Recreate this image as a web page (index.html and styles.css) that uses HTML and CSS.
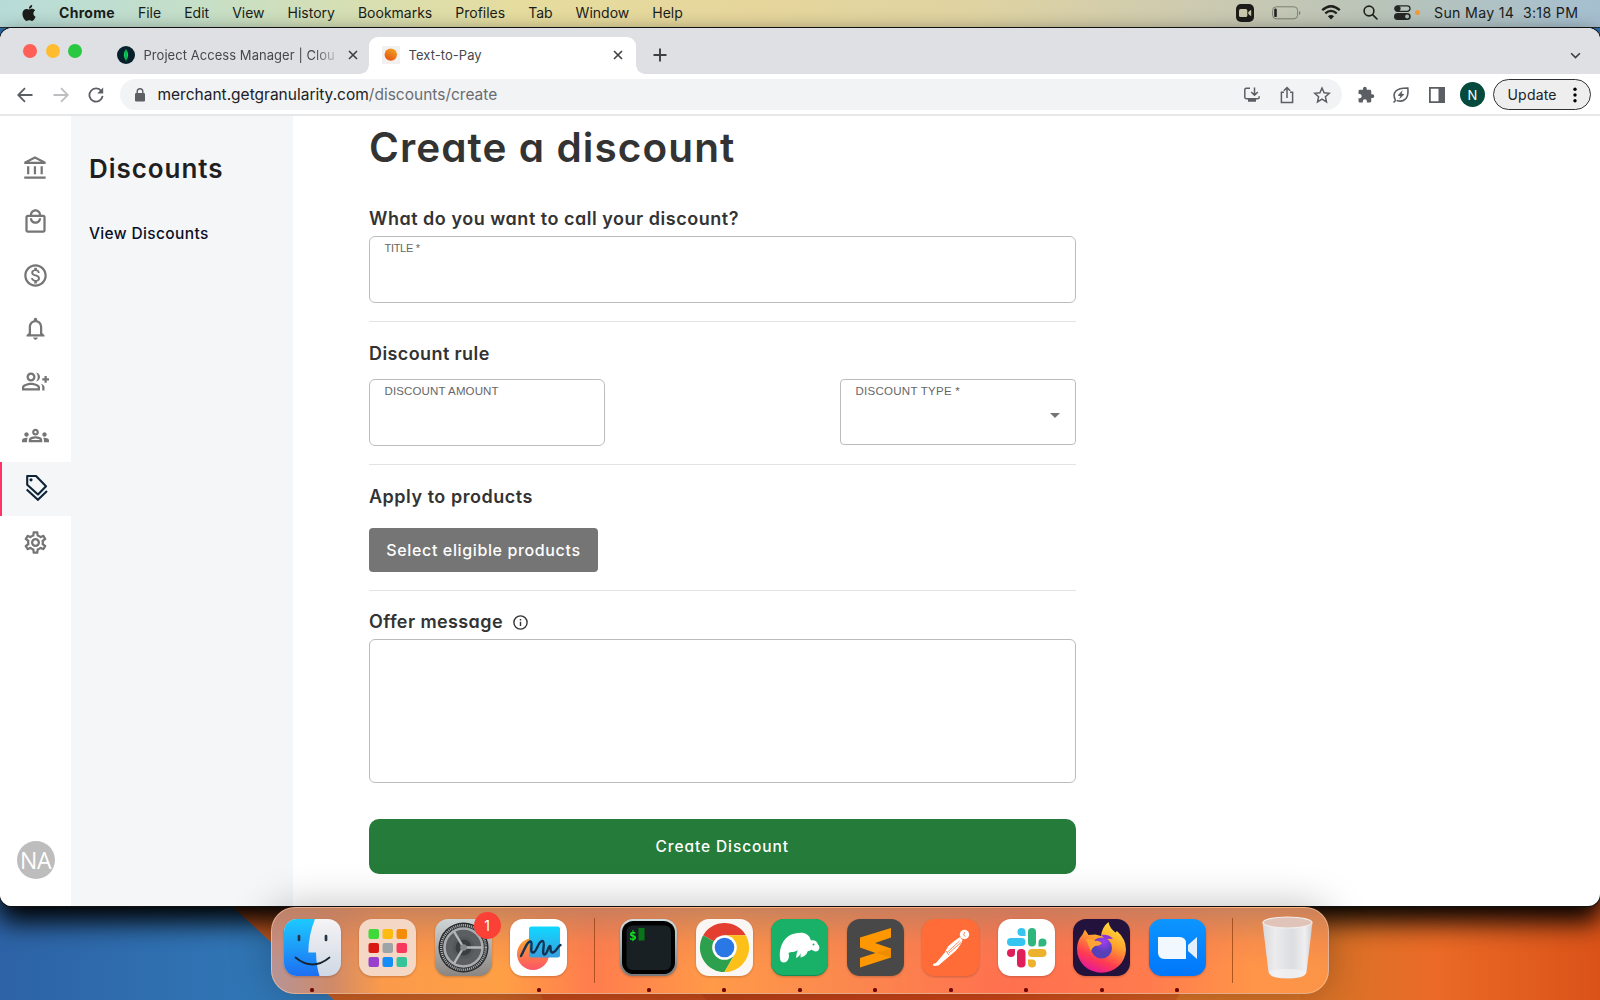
FILE: index.html
```html
<!DOCTYPE html>
<html lang="en">
<head>
<meta charset="utf-8">
<title>Text-to-Pay</title>
<link rel="stylesheet" href="styles.css">
</head>
<body>
<div class="desktop">
  <svg class="wallpaper" viewBox="0 0 1600 1000" preserveAspectRatio="none" aria-hidden="true">
    <defs>
      <linearGradient id="wpBlue" x1="0" x2="1"><stop offset="0" stop-color="#2d63a6"/><stop offset=".7" stop-color="#3179b8"/><stop offset="1" stop-color="#3478b2"/></linearGradient>
      <linearGradient id="wpOrange" x1="0" x2="1"><stop offset="0" stop-color="#c85a22"/><stop offset=".2" stop-color="#cf6526"/><stop offset=".3" stop-color="#b84117"/><stop offset=".55" stop-color="#ce4518"/><stop offset=".8" stop-color="#d97328"/><stop offset=".88" stop-color="#ea6a26"/><stop offset="1" stop-color="#da5218"/></linearGradient>
    </defs>
    <rect width="1600" height="1000" fill="#2f6fae"/>
    <rect y="900" width="420" height="100" fill="url(#wpBlue)"/>
    <path d="M225 900Q280 950 334 1000H1600V900Z" fill="url(#wpOrange)"/>
    <path d="M537 985L543 1000H706L696 985Z" fill="#c74a1a"/>
    <path d="M1185 985L1176 1000H1300V985Z" fill="#da7528"/>
  </svg>

  <header class="menubar">
    <svg class="apple" viewBox="0 0 24 24"><path d="M12.152 6.896c-.948 0-2.415-1.078-3.96-1.04-2.04.027-3.91 1.183-4.961 3.014-2.117 3.675-.546 9.103 1.519 12.09 1.013 1.454 2.208 3.09 3.792 3.039 1.52-.065 2.09-.987 3.935-.987 1.831 0 2.35.987 3.96.948 1.637-.026 2.676-1.48 3.676-2.948 1.156-1.688 1.636-3.325 1.662-3.415-.039-.013-3.182-1.221-3.22-4.857-.026-3.04 2.48-4.494 2.597-4.559-1.429-2.09-3.623-2.324-4.39-2.376-2-.156-3.675 1.09-4.61 1.09zM15.53 3.83c.843-1.012 1.4-2.427 1.245-3.83-1.207.052-2.662.805-3.532 1.818-.78.896-1.454 2.338-1.273 3.714 1.338.104 2.715-.688 3.559-1.701"/></svg>
    <nav class="menus"><b>Chrome</b><span>File</span><span>Edit</span><span>View</span><span>History</span><span>Bookmarks</span><span>Profiles</span><span>Tab</span><span>Window</span><span>Help</span></nav>
    <div class="status">
      <svg width="18" height="18" viewBox="0 0 18 18"><rect width="18" height="18" rx="5" fill="#1c1d18"/><rect x="3" y="5" width="8.3" height="8" rx="1.6" fill="#c9c9ae"/><path d="M12.3 8l2.9-2.3v6.600L12.3 10z" fill="#c9c9ae"/></svg>
      <svg class="battery" width="29" height="14" viewBox="0 0 29 14"><rect x=".6" y=".8" width="25" height="12" rx="3.6" fill="none" stroke="#7d8070"/><rect x="2.2" y="2.5" width="2.6" height="8.6" rx="1.2" fill="#222"/><path d="M27 5v4q1.4-.5 1.4-2T27 5z" fill="#7d8070"/></svg>
      <svg class="wifi" width="20" height="15" viewBox="0 0 20 15" fill="none" stroke="#1e201c" stroke-width="2.3"><path d="M1.2 5.2Q10-2.800 18.8 5.2"/><path d="M4.3 8.4Q10 3.400 15.7 8.4"/><path d="M10 14.6L6.9 11.3Q10 8.800 13.1 11.3z" fill="#1e201c" stroke="none"/></svg>
      <svg class="search" width="15" height="15" viewBox="0 0 15 15" fill="none" stroke="#1e201c" stroke-width="1.6"><circle cx="6" cy="6" r="4.9"/><path d="M9.6 9.6L14 14" stroke-linecap="round"/></svg>
      <svg class="control" width="17" height="15" viewBox="0 0 17 15"><rect x=".8" y=".8" width="15.2" height="5.6" rx="2.8" fill="none" stroke="#252724" stroke-width="1.3"/><circle cx="3.8" cy="3.6" r="2.8" fill="#252724"/><rect y="8" width="16.7" height="7" rx="3.5" fill="#252724"/><circle cx="13.1" cy="11.5" r="2" fill="#a9bab8"/></svg>
      <i class="mic-dot"></i>
      <span class="clock">Sun May 14&nbsp; 3:18 PM</span>
    </div>
  </header>

  <main class="window">
    <div class="tabstrip">
      <div class="lights"><i class="red"></i><i class="yellow"></i><i class="green"></i></div>
      <div class="tab">
        <svg class="fav" width="18" height="18" viewBox="0 0 18 18"><circle cx="9" cy="9" r="9" fill="#06202c"/><path d="M9 3Q13.3 9 9 14.5Q4.7 9 9 3z" fill="#12d85c"/><path d="M9 4v11.5" stroke="#067b38" stroke-width=".8"/></svg>
        <span class="tab-title fading">Project Access Manager | Clou</span>
        <svg class="x" viewBox="0 0 10 10"><path d="M1 1l8 8M9 1L1 9"/></svg>
      </div>
      <div class="tab active">
        <svg class="fav pay" width="18" height="18" viewBox="0 0 18 18"><rect width="18" height="18" fill="#f3f0f2"/><circle cx="8.8" cy="8.6" r="6.2" fill="url(#pay)"/><defs><linearGradient id="pay" x1=".8" y1="0" x2=".3" y2="1"><stop stop-color="#f0a324"/><stop offset="1" stop-color="#e65512"/></linearGradient></defs></svg>
        <span class="tab-title">Text-to-Pay</span>
        <svg class="x" viewBox="0 0 10 10"><path d="M1 1l8 8M9 1L1 9"/></svg>
      </div>
      <svg class="plus" viewBox="0 0 14 14"><path d="M7 .5v13M.5 7h13"/></svg>
      <svg class="chev" viewBox="0 0 10 7"><path d="M1 1l4 4 4-4"/></svg>
    </div>
    <div class="toolbar">
      <svg class="nav" viewBox="0 0 16 16"><path d="M15.5 8H1.5M8 1.2L1.2 8 8 14.8"/></svg>
      <svg class="nav off" viewBox="0 0 16 16"><path d="M.5 8h14M8 1.2L14.8 8 8 14.8"/></svg>
      <svg class="nav" viewBox="0 0 16 16"><path d="M13.4 4.2A6.6 6.6 0 1 0 14.6 8.8"/><path d="M15.2 .6v6H9.2z" fill="#5b5f64" stroke="none"/></svg>
      <div class="omnibox">
        <svg width="10" height="14" viewBox="0 0 10 14"><rect y="5" width="10" height="8.4" rx="1.2" fill="#5b5f64"/><path d="M2.2 6V3.6a2.8 2.8 0 0 1 5.6 0V6" fill="none" stroke="#5b5f64" stroke-width="1.4"/></svg>
        <span class="url">merchant.getgranularity.com<em>/discounts/create</em></span>
        <svg class="act" viewBox="0 0 18 18"><path d="M7 2.3H3.2Q1.8 2.3 1.8 3.7v7.6q0 1.4 1.4 1.4h11.6q1.4 0 1.4-1.4v-1M11.5 1.5v7M8.2 6l3.3 3.3L14.8 6"/><path d="M5 12.7h8v3H5z" fill="#5b5f64" stroke="none"/></svg>
        <svg class="act" viewBox="0 0 18 18"><path d="M6 6.2H3.4v10.3h11.2V6.2H12M9 12V1.8M5.8 4.8L9 1.6l3.2 3.2"/></svg>
        <svg class="act" viewBox="0 0 18 18"><path d="M9 2l2.1 4.8 5.2.5-3.9 3.5 1.1 5.1L9 13.2l-4.5 2.7 1.1-5.1L1.7 7.3l5.2-.5z"/></svg>
      </div>
      <svg class="ext puzzle" viewBox="0 0 24 24"><path d="M20.5 11H19V7c0-1.1-.9-2-2-2h-4V3.5C13 2.12 11.88 1 10.5 1S8 2.12 8 3.5V5H4c-1.1 0-1.99.9-1.99 2v3.8H3.5c1.49 0 2.7 1.21 2.7 2.7s-1.21 2.7-2.7 2.7H2V20c0 1.1.9 2 2 2h3.8v-1.5c0-1.49 1.21-2.7 2.7-2.7 1.49 0 2.7 1.21 2.7 2.7V22H17c1.1 0 2-.9 2-2v-4h1.5c1.38 0 2.5-1.12 2.5-2.5S21.88 11 20.5 11z" fill="#5b5f64"/></svg>
      <svg class="ext" viewBox="0 0 18 18"><path d="M1.5 16.5L4 14M3.4 14Q.6 8.5 3.7 5.2T15.8 2Q16.7 10 13.3 13.2T4.8 14.4" fill="none" stroke="#5b5f64" stroke-width="1.6"/><path d="M10.8 4L5.6 9.6l2.8.6L7 13.4l5.4-5.2-2.8-.8z" fill="#5b5f64"/></svg>
      <svg class="ext panel" viewBox="0 0 16 16"><path d="M0 0h16v16H0zM1.8 1.8v12.4h7.7V1.8z" fill="#5b5f64" fill-rule="evenodd"/></svg>
      <span class="profile">N</span>
      <span class="update">Update<svg width="4" height="16" viewBox="0 0 4 16"><circle cx="2" cy="2.2" r="1.7"/><circle cx="2" cy="8" r="1.7"/><circle cx="2" cy="13.8" r="1.7"/></svg></span>
    </div>

    <div class="page">
      <nav class="rail">
        <a><svg viewBox="0 0 24 24"><path d="M6.5 10h-2v7h2v-7zm6 0h-2v7h2v-7zm8.5 9H2v2h19v-2zm-2.5-9h-2v7h2v-7zm-7-6.74L16.71 6H6.29l5.21-2.74m0-2.26L2 6v2h19V6l-9.5-5z"/></svg></a>
        <a><svg viewBox="0 0 24 24"><path d="M19 6h-2c0-2.76-2.24-5-5-5S7 3.24 7 6H5c-1.1 0-1.99.9-1.99 2L3 20c0 1.1.9 2 2 2h14c1.1 0 2-.9 2-2V8c0-1.1-.9-2-2-2zm-7-3c1.66 0 3 1.34 3 3H9c0-1.66 1.34-3 3-3zm7 17H5V8h14v12zm-7-8c-1.66 0-3-1.34-3-3H7c0 2.76 2.24 5 5 5s5-2.24 5-5h-2c0 1.66-1.34 3-3 3z"/></svg></a>
        <a><svg viewBox="0 0 24 24"><path d="M12 2C6.48 2 2 6.48 2 12s4.48 10 10 10 10-4.48 10-10S17.52 2 12 2zm0 18c-4.41 0-8-3.59-8-8s3.59-8 8-8 8 3.59 8 8-3.59 8-8 8zm.31-8.86c-1.77-.45-2.34-.94-2.34-1.67 0-.84.79-1.43 2.1-1.43 1.38 0 1.9.66 1.94 1.64h1.71c-.05-1.34-.87-2.57-2.49-2.97V5H10.9v1.69c-1.51.32-2.72 1.3-2.72 2.81 0 1.79 1.49 2.69 3.66 3.21 1.95.46 2.34 1.15 2.34 1.87 0 .53-.39 1.39-2.1 1.39-1.6 0-2.23-.72-2.32-1.64H8.04c.1 1.7 1.36 2.66 2.86 2.97V19h2.34v-1.67c1.52-.29 2.72-1.16 2.73-2.77-.01-2.2-1.9-2.96-3.66-3.42z"/></svg></a>
        <a><svg viewBox="0 0 24 24"><path d="M12 22c1.1 0 2-.9 2-2h-4c0 1.1.89 2 2 2zm6-6v-5c0-3.07-1.64-5.64-4.5-6.32V4c0-.83-.67-1.5-1.5-1.5s-1.5.67-1.5 1.5v.68C7.63 5.36 6 7.92 6 11v5l-2 2v1h16v-1l-2-2zm-2 1H8v-6c0-2.48 1.51-4.5 4-4.5s4 2.02 4 4.5v6z"/></svg></a>
        <a><svg viewBox="0 0 24 24"><path d="M22 9V7h-2v2h-2v2h2v2h2v-2h2V9zM8 12c2.21 0 4-1.79 4-4s-1.79-4-4-4-4 1.79-4 4 1.79 4 4 4zm0-6c1.1 0 2 .9 2 2s-.9 2-2 2-2-.9-2-2 .9-2 2-2zm0 7c-2.67 0-8 1.34-8 4v3h16v-3c0-2.66-5.33-4-8-4zm6 5H2v-.99C2.2 16.29 5.3 15 8 15s5.8 1.29 6 2v1zM12.51 4.05C13.43 5.11 14 6.49 14 8s-.57 2.89-1.49 3.95C14.47 11.7 16 10.04 16 8s-1.53-3.7-3.49-3.95zM16.53 13.83C17.42 14.66 18 15.7 18 17v3h2v-3c0-1.45-1.59-2.51-3.47-3.17z"/></svg></a>
        <a><svg viewBox="0 0 24 24"><path d="M4 13c1.1 0 2-.9 2-2s-.9-2-2-2-2 .9-2 2 .9 2 2 2zm1.13 1.1c-.37-.06-.74-.1-1.13-.1-.99 0-1.93.21-2.78.58C.48 14.9 0 15.62 0 16.43V18h4.5v-1.61c0-.83.23-1.61.63-2.29zM20 13c1.1 0 2-.9 2-2s-.9-2-2-2-2 .9-2 2 .9 2 2 2zm4 3.43c0-.81-.48-1.53-1.22-1.85-.85-.37-1.79-.58-2.78-.58-.39 0-.76.04-1.13.1.4.68.63 1.46.63 2.29V18H24v-1.57zm-7.76-2.78c-1.17-.52-2.61-.9-4.24-.9s-3.07.39-4.24.9C6.68 14.13 6 15.21 6 16.39V18h12v-1.61c0-1.18-.68-2.26-1.76-2.74zM8.07 16c.09-.23.13-.39.91-.69.97-.38 1.99-.56 3.02-.56s2.05.18 3.02.56c.77.3.81.46.91.69H8.07zM12 8c.55 0 1 .45 1 1s-.45 1-1 1-1-.45-1-1 .45-1 1-1m0-2c-1.66 0-3 1.34-3 3s1.34 3 3 3 3-1.34 3-3-1.34-3-3-3z"/></svg></a>
        <a class="current"><svg viewBox="0 0 27 27"><g fill="none" stroke="#0d2438" stroke-width="2.1"><path d="M5.2 2h8.8l10 10.2-8 8.3L5.2 10.7z" stroke-linejoin="round"/><path d="M4.7 15.4L15.9 25.8 25 17"/></g><circle cx="9" cy="5.8" r="1.6" fill="#0d2438"/></svg></a>
        <a><svg viewBox="0 0 24 24"><path d="M19.43 12.98c.04-.32.07-.64.07-.98 0-.34-.03-.66-.07-.98l2.11-1.65c.19-.15.24-.42.12-.64l-2-3.46c-.09-.16-.26-.25-.44-.25-.06 0-.12.01-.17.03l-2.49 1c-.52-.4-1.08-.73-1.69-.98l-.38-2.65C14.46 2.18 14.25 2 14 2h-4c-.25 0-.46.18-.49.42l-.38 2.65c-.61.25-1.17.59-1.69.98l-2.49-1c-.06-.02-.12-.03-.18-.03-.17 0-.34.09-.43.25l-2 3.46c-.13.22-.07.49.12.64l2.11 1.65c-.04.32-.07.65-.07.98 0 .33.03.66.07.98l-2.11 1.65c-.19.15-.24.42-.12.64l2 3.46c.09.16.26.25.44.25.06 0 .12-.01.17-.03l2.49-1c.52.4 1.08.73 1.69.98l.38 2.65c.03.24.24.42.49.42h4c.25 0 .46-.18.49-.42l.38-2.65c.61-.25 1.17-.59 1.69-.98l2.49 1c.06.02.12.03.18.03.17 0 .34-.09.43-.25l2-3.46c.12-.22.07-.49-.12-.64l-2.11-1.65zm-1.98-1.71c.04.31.05.52.05.73 0 .21-.02.43-.05.73l-.14 1.13.89.7 1.08.84-.7 1.21-1.27-.51-1.04-.42-.9.68c-.43.32-.84.56-1.25.73l-1.06.43-.16 1.13-.2 1.35h-1.4l-.19-1.35-.16-1.13-1.06-.43c-.43-.18-.83-.41-1.23-.71l-.91-.7-1.06.43-1.27.51-.7-1.21 1.08-.84.89-.7-.14-1.13c-.03-.31-.05-.54-.05-.74s.02-.43.05-.73l.14-1.13-.89-.7-1.08-.84.7-1.21 1.27.51 1.04.42.9-.68c.43-.32.84-.56 1.25-.73l1.06-.43.16-1.13.2-1.35h1.39l.19 1.35.16 1.13 1.06.43c.43.18.83.41 1.23.71l.91.7 1.06-.43 1.27-.51.7 1.21-1.07.85-.89.7.14 1.13zM12 8c-2.21 0-4 1.79-4 4s1.79 4 4 4 4-1.79 4-4-1.79-4-4-4zm0 6c-1.1 0-2-.9-2-2s.9-2 2-2 2 .9 2 2-.9 2-2 2z"/></svg></a>
        <span class="avatar">NA</span>
      </nav>
      <aside class="sidebar">
        <h2>Discounts</h2>
        <a>View Discounts</a>
      </aside>
      <section class="form">
        <h1>Create a discount</h1>
        <h3 class="q1">What do you want to call your discount?</h3>
        <div class="field"><label class="l-title">TITLE *</label></div>
        <hr>
        <h3 class="q2">Discount rule</h3>
        <div class="pair">
          <div class="field small"><label class="l-amount">DISCOUNT AMOUNT</label></div>
          <div class="field small select"><label class="l-type">DISCOUNT TYPE *</label><i class="caret"></i></div>
        </div>
        <hr>
        <h3 class="q3">Apply to products</h3>
        <button class="grey">Select eligible products</button>
        <hr>
        <h3 class="q4">Offer message <svg width="15" height="15" viewBox="0 0 15 15"><circle cx="7.5" cy="7.5" r="6.6" fill="none" stroke="#333" stroke-width="1.4"/><path d="M6.8 6.7h1.4V11H6.8zM6.8 4h1.4v1.5H6.8z" fill="#333"/></svg></h3>
        <div class="field area"></div>
        <button class="create">Create Discount</button>
      </section>
    </div>
  </main>

  <footer class="dock">
    <div class="app on"><svg viewBox="0 0 57 57"><defs><linearGradient id="fb" x2="0" y2="1"><stop stop-color="#1dc9ff"/><stop offset="1" stop-color="#1d6ff2"/></linearGradient><linearGradient id="fw" x2="0" y2="1"><stop stop-color="#f5f3f5"/><stop offset="1" stop-color="#cfd8e4"/></linearGradient><clipPath id="sq"><rect width="57" height="57" rx="13"/></clipPath></defs><g clip-path="url(#sq)"><rect width="57" height="57" fill="url(#fw)"/><path d="M0 0H31Q24.500 16 24.300 33.500H32Q32.300 47 35.500 57H0z" fill="url(#fb)"/></g><path d="M15 17v4M42 17v4" stroke="#223546" stroke-width="2.700" stroke-linecap="round"/><path d="M11.500 38.500Q28.500 52.500 45.500 38.500" fill="none" stroke="#172431" stroke-width="1.700" stroke-linecap="round"/></svg></div>
    <div class="app"><svg viewBox="0 0 57 57"><rect width="57" height="57" rx="13" fill="#f4d7c4"/><rect x="9.500" y="10" width="10.500" height="10" rx="2" fill="#40d93c"/><rect x="23.500" y="10" width="10.500" height="10" rx="2" fill="#fdba10"/><rect x="37.500" y="10" width="10.500" height="10" rx="2" fill="#f48b09"/><rect x="9.500" y="24" width="10.500" height="10" rx="2" fill="#d91a12"/><rect x="23.500" y="24" width="10.500" height="10" rx="2" fill="#9da4a6"/><rect x="37.500" y="24" width="10.500" height="10" rx="2" fill="#f9385d"/><rect x="9.500" y="38" width="10.500" height="10" rx="2" fill="#9840ce"/><rect x="23.500" y="38" width="10.500" height="10" rx="2" fill="#148df7"/><rect x="37.500" y="38" width="10.500" height="10" rx="2" fill="#35c39a"/></svg></div>
    <div class="app"><svg viewBox="0 0 57 57"><defs><linearGradient id="st" x2="0" y2="1"><stop stop-color="#cfd6d8"/><stop offset="1" stop-color="#8b8580"/></linearGradient></defs><rect width="57" height="57" rx="13" fill="url(#st)"/><circle cx="28.500" cy="28.500" r="25" fill="#292b2d"/><circle cx="28.500" cy="28.500" r="22.300" fill="none" stroke="#a9adaf" stroke-width="2.500" stroke-dasharray="1.100 .9"/><circle cx="28.500" cy="28.500" r="19" fill="#5c5f61" stroke="#a9adaf" stroke-width="2.600"/><circle cx="28.500" cy="28.500" r="9.500" fill="#3b3e40" stroke="#55585a" stroke-width="3"/><path d="M28.500 28.500H47M28.500 28.500L19 12.500M28.500 28.500L19 44.500" stroke="#b4b8ba" stroke-width="2.400"/><circle cx="28.500" cy="28.500" r="3.300" fill="#85898b"/></svg><b class="badge">1</b></div>
    <div class="app on"><svg viewBox="0 0 57 57"><defs><linearGradient id="fo" x2="0" y2="1"><stop stop-color="#ffa52a"/><stop offset="1" stop-color="#fb5568"/></linearGradient><linearGradient id="fc" x2="0" y2="1"><stop stop-color="#0fd8ff"/><stop offset="1" stop-color="#389fe0"/></linearGradient></defs><rect width="57" height="57" rx="13" fill="#fff"/><circle cx="23" cy="35" r="16" fill="url(#fo)"/><rect x="19" y="7.500" width="31" height="31" rx="2.500" fill="url(#fc)"/><path d="M11 37C14 32 17 22 20.500 22.500 23.500 23 19 33.500 23 33.500 27 33.500 28 21.500 32.500 22 36 22.500 31 35.500 34.500 35.500 37.500 35.500 38 27 40 27 41.500 27 39 34 43 33.500 46.500 33 47 28 50.500 26" fill="none" stroke="#123453" stroke-width="2.400" stroke-linecap="round"/></svg></div>
    <i class="sep"></i>
    <div class="app on"><svg viewBox="0 0 57 57"><defs><linearGradient id="tb" x2="0" y2="1"><stop stop-color="#d2dde0"/><stop offset="1" stop-color="#77797c"/></linearGradient></defs><rect width="57" height="57" rx="13" fill="url(#tb)"/><rect x="2" y="2" width="53" height="53" rx="11.500" fill="#000"/><rect x="6.500" y="6.500" width="44.500" height="44.500" rx="6" fill="#182024"/><text x="9" y="20.500" class="prompt">$</text><rect x="18.500" y="9" width="6" height="12.500" fill="#0a7418"/></svg></div>
    <div class="app on"><svg viewBox="0 0 57 57"><rect width="57" height="57" rx="13" fill="#faf6f4"/><g><path d="M28.500 28.500L7.200 16.200A24.600 24.600 0 0 1 49.800 16.200H28.500z" fill="#e43e30"/><path d="M28.500 28.500L39 34.600 28.500 53.100A24.600 24.600 0 0 1 7.200 16.200z" fill="#2da04e"/><path d="M28.500 16.200H49.800A24.600 24.600 0 0 1 28.500 53.100L39.200 34.600z" fill="#fcc018"/></g><circle cx="28.500" cy="28.500" r="12.300" fill="#fff"/><circle cx="28.500" cy="28.500" r="9.800" fill="#2a78e6"/></svg></div>
    <div class="app on"><svg viewBox="0 0 57 57"><rect width="57" height="57" rx="13" fill="#0f8f56"/><rect width="57" height="56" rx="13" fill="#19b167"/><path d="M9 39C8 29 12 17 24 14.500c9-2 14 .5 16 7 3-1 6 .5 6.500 3 1.500 2 2.500 4 1.500 6-1.500 3-5.500 2-7.500 0-1 1-2.500 1.500-4 2-.5 3-4 5.500-7 6 .5-2-.5-3 .5-4.500-1.500 2-2 4-5 5 .5-3 .5-6 2-8-3 2.500-7 1.500-9.500 3 1.500 4-.5 9.500-4.500 9.500-3 0-4-2-4-4.500z" fill="#fff"/><circle cx="42.500" cy="25.500" r="1" fill="#19b167"/></svg></div>
    <div class="app on"><svg viewBox="0 0 57 57"><rect width="57" height="57" rx="13" fill="#484848"/><path d="M13 18.500L44 9v9.500L28 24l16 5.500v8.900L13 48.500V39l15.500-5L13 28.500z" fill="#ff9800"/><path d="M28.500 34L44 29.500v8.900z" fill="#f08c00"/></svg></div>
    <div class="app on"><svg viewBox="0 0 57 57"><rect width="57" height="57" rx="13" fill="#ff6c37"/><circle cx="42.500" cy="15.500" r="4.700" fill="#fff"/><path d="M38.200 18Q33 21 26 27.500L22.500 34 14 44l-3 1 .5 2 5-.5L27 37.500l6.500-5.500q5.500-6 7-11z" fill="#fff"/><path d="M37.500 22L25 33.500M39 23.500L27 34M24 32l3 4M43 13l-1.500 3 2 1.500" stroke="#ff6c37" stroke-width=".8" fill="none"/></svg></div>
    <div class="app on"><svg viewBox="0 0 57 57"><rect width="57" height="57" rx="13" fill="#fff"/><g fill="#36c5f0"><rect x="9" y="19" width="18.500" height="8" rx="4"/><path d="M27.500 17h-4a4 4 0 1 1 4-4z"/></g><g fill="#2eb67d"><rect x="30" y="9" width="8" height="18.500" rx="4"/><path d="M40.500 27.500v-4a4 4 0 1 1 4 4z"/></g><g fill="#ecb22e"><rect x="30" y="30" width="18.500" height="8" rx="4"/><path d="M30 40.500h4a4 4 0 1 1-4 4z"/></g><g fill="#e01e5a"><rect x="19" y="30" width="8.500" height="18.500" rx="4"/><path d="M17 30v4a4 4 0 1 1-4-4z"/></g></svg></div>
    <div class="app on"><svg viewBox="0 0 57 57"><defs><linearGradient id="ff" x1=".8" y1="0" x2=".35" y2="1"><stop stop-color="#ffe83a"/><stop offset=".4" stop-color="#ffa22d"/><stop offset=".75" stop-color="#ff3b52"/><stop offset="1" stop-color="#e4189a"/></linearGradient><radialGradient id="fp" cx=".6" cy=".2"><stop stop-color="#a43cf0"/><stop offset="1" stop-color="#5540b8"/></radialGradient></defs><rect width="57" height="57" rx="13" fill="#23123c"/><path d="M28 17Q29 8 35.500 3q1 6 7 10.500l1.500-1.500Q53 20 53 30.500A24.500 23.500 0 0 1 4 30Q4 21.500 9.500 15.500l2.500-5 3.500 5.500 7-.5z" fill="url(#ff)"/><path d="M28 16q8-1 12 4-4-1-7 1z" fill="#8b35d8"/><circle cx="28.500" cy="29" r="10.500" fill="url(#fp)"/><path d="M13 20q6-1.500 9.500 2 4-1 6.500 2.500-2.500 2.500-7 2.500-3 2-4.500 5z" fill="#ffa335"/></svg></div>
    <div class="app on"><svg viewBox="0 0 57 57"><defs><linearGradient id="zm" x2="0" y2="1"><stop stop-color="#0d96ff"/><stop offset="1" stop-color="#0076fb"/></linearGradient></defs><rect width="57" height="57" rx="13" fill="url(#zm)"/><path d="M9 18h21.500q6.500 0 6.500 6.500V40H15.500Q9 40 9 33.500z" fill="#f2f8ff"/><path d="M39 26l9-8v22l-9-8z" fill="#e3effc"/></svg></div>
    <i class="sep last"></i>
    <div class="trash"><svg viewBox="0 0 51 64"><defs><linearGradient id="tr" x2="1"><stop stop-color="#d9d9db"/><stop offset=".25" stop-color="#ececee"/><stop offset=".6" stop-color="#dcdde0"/><stop offset=".85" stop-color="#efeff1"/><stop offset="1" stop-color="#cfcfd3"/></linearGradient></defs><path d="M.5 6.500L6.500 56q1 6.500 19 6.500T44.500 56l6-49.500z" fill="url(#tr)"/><ellipse cx="25.500" cy="6.500" rx="24.500" ry="5.500" fill="#e0c4ba" stroke="#f2ecea" stroke-width="1.200"/><path d="M7 56q4-3 18.500-3T44 56q-1 6-18.500 6T7 56z" fill="#f4f4f6" opacity=".7"/></svg></div>
  </footer>
</div>
</body>
</html>
```
FILE: styles.css
```css
* { box-sizing: border-box; }
body { margin: 0; font-family: Inter, "Liberation Sans", sans-serif; }
svg { display: block; flex: none; }

.desktop { position: relative; width: 1600px; height: 1000px; overflow: hidden; }
.wallpaper { position: absolute; inset: 0; width: 1600px; height: 1000px; }

/* menu bar */
.menubar { position: relative; height: 28px; display: flex; align-items: center; padding: 0 19px 2px 21px; border-bottom: 1px solid #26302f;
  background: linear-gradient(90deg, #b7dcd8 0, #c5dfc9 190px, #d5dfb4 340px, #e6dc9e 520px, #e6d69c 760px, #dfd3a2 980px, #cccab0 1200px, #b9c4b9 1380px, #a5bfd0 1600px); color: #1b1d1a; font-size: 14px; }
.apple { width: 16px; height: 18px; fill: #1b1d1a; }
.menus { display: flex; gap: 23px; margin-left: 22px; }
.menus b { font-weight: 700; letter-spacing: .3px; }
.status { margin-left: auto; display: flex; align-items: center; }
.battery { margin-left: 18px; }
.wifi { margin-left: 20px; }
.search { margin-left: 22px; }
.control { margin-left: 16px; }
.mic-dot { width: 5px; height: 5px; border-radius: 50%; background: #f29b38; margin-left: 4px; }
.clock { margin-left: 14px; width: 147px; white-space: nowrap; font-size: 14.200px; letter-spacing: .3px; }

/* browser window */
.window { position: relative; height: 877.500px; border-radius: 12px; overflow: hidden; background: #fff; box-shadow: 0 0 0 1px #111, 0 14px 26px 2px #000; display: flex; flex-direction: column; }
.tabstrip { height: 46px; background: #dee0e4; display: flex; align-items: flex-end; flex: none; }
.lights { display: flex; gap: 8.500px; margin: 0 34.500px 16px 23px; }
.lights i { width: 14px; height: 14px; border-radius: 50%; }
.red { background: #fe5f57; } .yellow { background: #febc2e; } .green { background: #28c840; }
.tab { height: 37px; display: flex; align-items: center; width: 252px; color: #45484c; font-size: 13px; padding-bottom: 1px; }
.tab.active { background: #fff; border-radius: 9px 9px 0 0; width: 267px; padding-left: 13px; position: relative; }
.tab.active::before, .tab.active::after { content: ""; position: absolute; bottom: 0; width: 9px; height: 9px; }
.tab.active::before { left: -9px; background: radial-gradient(circle at 0 0, transparent 8.500px, #fff 9px); }
.tab.active::after { right: -9px; background: radial-gradient(circle at 100% 0, transparent 8.500px, #fff 9px); }
.tab-title { margin-left: 9px; white-space: nowrap; flex: none; letter-spacing: .05px; }
.tab.active .tab-title { width: 190px; }
.fading { width: 195px; -webkit-mask-image: linear-gradient(90deg, #000 170px, transparent 197px); mask-image: linear-gradient(90deg, #000 170px, transparent 197px); }
.x { width: 10px; height: 10px; margin-left: 9px; fill: none; stroke: #3c4043; stroke-width: 1.600; }
.tab.active .x { margin-left: 14px; }
.plus { width: 14px; height: 14px; margin: 0 0 12px 17px; fill: none; stroke: #3c4043; stroke-width: 1.900; }
.chev { width: 11px; height: 8px; margin: 0 19px 14px auto; fill: none; stroke: #3c4043; stroke-width: 1.500; }
.toolbar { height: 42px; flex: none; display: flex; align-items: center; padding: 1px 8px 0 17px; border-bottom: 2px solid #e6e7e9; }
.nav { width: 16px; height: 16px; margin-right: 19.500px; fill: none; stroke: #5b5f64; stroke-width: 1.800; }
.nav.off { stroke: #bcbec1; }
.nav + .omnibox { margin-left: -4px; }
.omnibox { flex: none; width: 1222px; height: 31px; border-radius: 16px; background: #f1f3f4; display: flex; align-items: center; padding: 0 11px 0 15px; gap: 17px; }
.url { margin-left: -4px; margin-right: auto; font-size: 15.500px; color: #202124; }
.url em { font-style: normal; color: #696d72; }
.act { width: 18px; height: 18px; fill: none; stroke: #5b5f64; stroke-width: 1.500; }
.ext { width: 18px; height: 18px; margin-left: 17px; }
.puzzle { margin-left: 15.500px; width: 18px; }
.panel { width: 16px; height: 16px; margin-left: 19px; }
.profile { width: 25px; height: 25px; border-radius: 50%; background: #054a3c; color: #fff; font-size: 13px; display: grid; place-items: center; margin-left: 15px; }
.update { margin-left: 7.500px; width: 98px; height: 31px; border: 1.500px solid #303134; border-radius: 16px; background: #eeeeef; display: flex; align-items: center; justify-content: space-between; padding: 0 13px 0 14px; font-size: 14px; letter-spacing: .2px; color: #202124; }

/* page */
.page { flex: 1; display: flex; min-height: 0; }
.rail { width: 71px; flex: none; display: flex; flex-direction: column; padding-top: 25.500px; background: #fff; }
.rail a { height: 53.450px; flex: none; display: grid; place-items: center; }
.rail a svg { width: 27px; height: 27px; fill: #757575; }
.rail .current { background: #f5f6f8; border-left: 2px solid #ff3366; padding: 0 2px 2px 0; }
.avatar { width: 38px; height: 38px; border-radius: 50%; background: #bdbdbd; color: #fff; display: grid; place-items: center; font: 23px "Open Sans", sans-serif; letter-spacing: -.5px; margin: auto 0 26.500px 16.500px; }
.sidebar { width: 222px; flex: none; background: #f5f6f8; padding: 35px 0 0 18px; color: #1f1f1f; }
.sidebar h2 { margin: 0; font-size: 26px; line-height: 36px; font-weight: 600; letter-spacing: .95px; }
.sidebar a { display: block; margin-top: 35px; font-size: 15.500px; line-height: 24px; font-weight: 500; letter-spacing: .36px; color: #0a1027; }
.form { width: 706.500px; margin-left: 76px; color: #333; display: flex; flex-direction: column; align-items: flex-start; }
h1, h2, h3, .sidebar a, button { font-feature-settings: "cv11" 1; white-space: nowrap; }
h1 { margin: 4px 0 0; font-size: 40.500px; line-height: 56px; font-weight: 600; height: 75px; letter-spacing: 1.080px; }
h3 { margin: 0; font-size: 18px; line-height: 24px; font-weight: 600; display: flex; align-items: center; letter-spacing: .52px; }
.q1 { margin-top: 12px; }
.q2, .q4 { letter-spacing: .400px; }
.q4 svg { margin: 1px 0 0 10px; }
.field { width: 100%; height: 67px; border: 1px solid #bcbcbc; border-radius: 6px; padding: 5px 14.500px; margin-top: 5px; position: relative; font-size: 0; background: #fff; }
.field label { display: block; font: 11.500px/13px "Liberation Sans", sans-serif; color: #666; }
.field .l-title { font-size: 11px; letter-spacing: -.3px; }
.l-amount { letter-spacing: .13px; }
.l-type { letter-spacing: .27px; }
hr { width: 100%; height: 1px; border: 0; background: #e3e3e3; margin: 18px 0 20px; flex: none; }
.pair { width: 100%; display: flex; justify-content: space-between; padding-top: 8px; }
.small { width: 235.500px; }
.select { height: 66px; border-radius: 4px; }
.caret { position: absolute; right: 15px; top: 33px; border: 5px solid transparent; border-top-color: #757575; border-bottom: 0; }
button { border: 0; color: #fff; font-family: inherit; font-weight: 500; padding: 0; }
.grey { width: 229px; height: 44px; border-radius: 4px; background: #757575; font-size: 16px; letter-spacing: .63px; margin-top: 19px; }
.grey + hr { margin: 17.500px 0 19.500px; }
.area { height: 144px; }
.create { width: 100%; height: 55px; flex: none; margin-top: 36px; border-radius: 10px; background: #257b39; font-size: 15.500px; letter-spacing: .9px; }

/* dock */
.dock { position: absolute; left: 271px; top: 907px; width: 1058px; height: 87px; border-radius: 24px; padding: 11px 0 0 11.500px; display: flex; align-items: flex-start; gap: 18.500px; border: 1px solid rgba(255,205,170,.55);
  background: linear-gradient(180deg, rgba(190,125,95,.8) 0, rgba(230,125,80,.3) 35px, transparent 60px), linear-gradient(90deg, #b69496 0, #d08a68 60px, #fb9a4a 110px, #ff9f45 230px, #ff7c4e 320px, #ff9a48 440px, #fb8a4e 560px, #ff704f 740px, #ff7c4e 880px, #ff9548 980px, #fb9447 1058px);
  box-shadow: 0 0 42px rgba(0,0,0,.27); }
.app { width: 57px; height: 75px; position: relative; flex: none; }
.app svg { width: 57px; height: 57px; filter: drop-shadow(0 1px 1px rgba(0,0,0,.2)); }
.app.on::after { content: ""; display: block; width: 4px; height: 4px; border-radius: 1.500px; background: #6e0805; margin: 12px auto 0; }
.badge { position: absolute; right: -9px; top: -7px; width: 27px; height: 27px; border-radius: 50%; background: #fb4038; color: #fff; font-size: 14px; font-weight: 400; display: grid; place-items: center; }
.sep { width: 1px; height: 65px; background: rgba(150,65,15,.75); margin: -1px 7px 0 8px; flex: none; }
.sep.last { margin: -1px 10px 0 8px; }
.prompt { font: bold 13px "DejaVu Sans Mono", monospace; fill: #12e622; }
.trash svg { width: 51px; height: 64px; margin-top: -3px; }
```
